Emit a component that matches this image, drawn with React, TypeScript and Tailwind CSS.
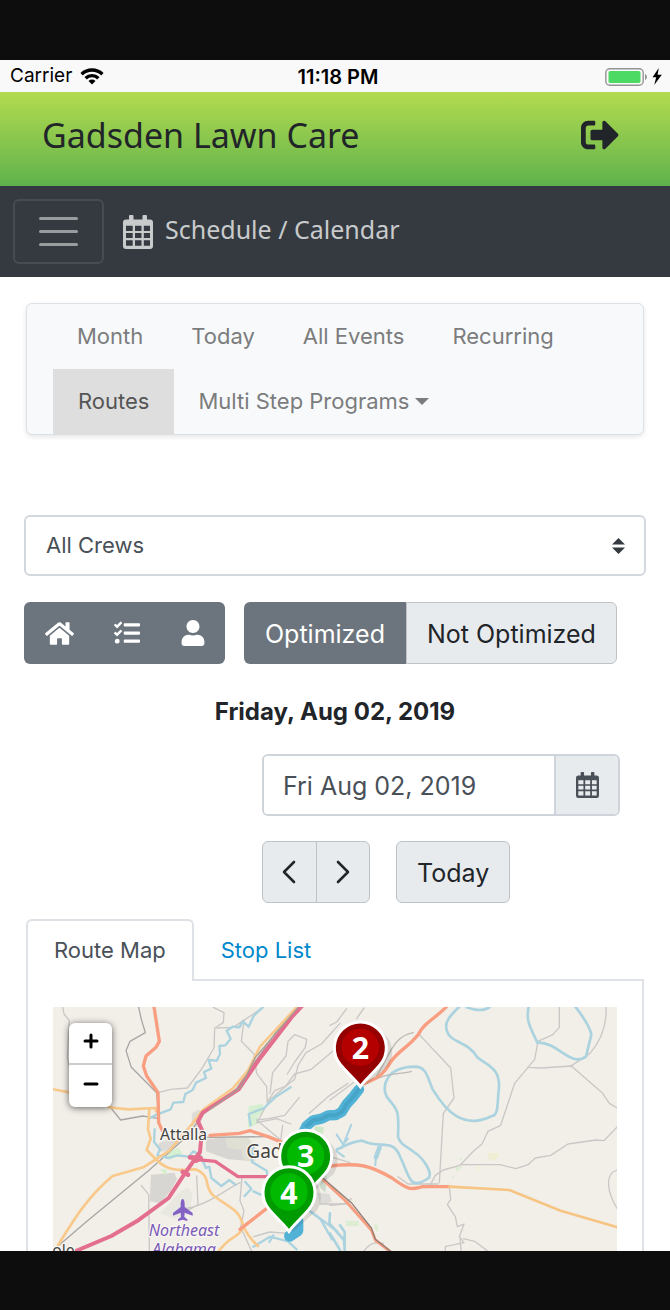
import { useState } from "react";
import { FaHome, FaSignOutAlt, FaTasks, FaUser } from "react-icons/fa";

const NAV_ITEMS = ["Month", "Today", "All Events", "Recurring", "Routes"];

function StatusBar() {
  return (
    <div className="grid h-8 grid-cols-3 items-center bg-[#f9f9f9] pt-px pr-2 pl-[10px] text-black">
      <div className="flex items-center gap-2 text-[19px]">
        <span>Carrier</span>
        <svg viewBox="0 0 24 17" className="h-[17px] w-6" fill="none" stroke="currentColor" strokeWidth="3.4" aria-label="Wi-Fi">
          <path d="M1.6 6.2a15 15 0 0 1 20.8 0" />
          <path d="M5.6 10.2a9.2 9.2 0 0 1 12.8 0" />
          <path d="M12 16.6l-3.5-3.6a5 5 0 0 1 7 0z" fill="currentColor" stroke="none" />
        </svg>
      </div>
      <span className="pl-1 text-center text-xl font-semibold whitespace-nowrap">11:18 PM</span>
      <div className="flex items-center justify-end gap-1">
        <svg viewBox="0 0 43 18" className="h-[18px] w-[43px]" aria-label="Battery">
          <rect x=".8" y=".8" width="37.4" height="16.4" rx="4" fill="none" stroke="#949494" strokeWidth="1.4" />
          <rect x="3.5" y="3" width="32" height="12" rx="1.8" fill="#4cd964" />
          <path d="M40 6c2.600 1 2.600 5 0 6z" fill="#949494" />
        </svg>
        <svg viewBox="0 0 10 17" className="h-[17px] w-[10px]" fill="currentColor" aria-label="Charging">
          <path d="M6.800 0L.5 9.300h3.700L2.200 17 9.800 6.700H5.600z" />
        </svg>
      </div>
    </div>
  );
}

function CalendarIcon({ className }: { className: string }) {
  return (
    <svg viewBox="0 0 30 34" className={className} fill="currentColor" aria-hidden="true">
      <path
        fillRule="evenodd"
        d="M6 1q0-1 1-1h2.500q1 0 1 1v3.500h9V1q0-1 1-1H23q1 0 1 1v3.500h3q3 0 3 3V31q0 3-3 3H3q-3 0-3-3V7.500q0-3 3-3h3zM3 10.700v5.300h6.700v-5.300zM12 10.700v5.300h6.500v-5.300zM20.800 10.700v5.300H27v-5.300zM3 18v5h6.700v-5zM12 18v5h6.500v-5zM20.800 18v5H27v-5zM3 25.300v5.500h6.700v-5.500zM12 25.300v5.500h6.500v-5.500zM20.800 25.300v5.500H27v-5.500z"
      />
    </svg>
  );
}

function Chevron({ d }: { d: string }) {
  return (
    <svg viewBox="0 0 14 24" className="h-6 w-[14px]" fill="none" stroke="currentColor" strokeWidth="2.600" strokeLinecap="round" strokeLinejoin="round" aria-hidden="true">
      <path d={d} />
    </svg>
  );
}

function Pin({ x, y, label, dark, light }: { x: number; y: number; label: string; dark: string; light: string }) {
  return (
    <g transform={`translate(${x} ${y})`}>
      <path d="M12 118L-45 54A76 76 0 1 1 84 54Z" fill="#000" opacity=".1" />
      <path d="M0 117C-12 99-41 74-59 52A78 78 0 1 1 59 52C41 74 12 99 0 117Z" fill={dark} stroke="#fff" strokeWidth="9" />
      <circle r="56" cy="-1" fill={light} />
      <text y="34" textAnchor="middle" fontSize="91" fontWeight="700" fill="#fff">
        {label}
      </text>
    </g>
  );
}

function RouteMap() {
  return (
    <svg
      viewBox="0 0 1692 732"
      preserveAspectRatio="xMidYMin slice"
      className="block h-[244px] w-full bg-[#f2efe9] font-['Noto_Sans',sans-serif]"
      role="img"
      aria-label="Route map"
    >
      <g transform="translate(-39 -21)" fill="none" strokeLinejoin="round" strokeLinecap="round">
        <g stroke="none">
          <path d="M333 524l70-6 8 20-20 36-30 36-32-6z" fill="#d8d6d2" />
          <path d="M498 418l58-6 12 30 42 6 10 34-56-4-66-24z" fill="#d8d6d2" />
          <path d="M556 414h70l20 30v40h-34l-8-34-42-6z" fill="#e0dfd4" />
          <path d="M456 340l20-12 14 20-14 34-22 4z" fill="#deddd6" />
          <path d="M356 430l40-16 24 16-30 22-36 4z" fill="#dddbd7" />
          <path d="M362 640l60-66 22-12 14 20-10 60-46 14z" fill="#e8e7e0" />
          <path d="M626 318l42-6 4 24-20 12 6 22-34 14z" fill="#d5efd0" />
          <path d="M360 508h22l-6 18zM378 460l38-16 12 18-40 18z" fill="#d5efd0" />
          <path d="M826 378l26 4-4 22-26-6z" fill="#cfe8c8" />
          <path d="M846 520l14 4-4 54-16-16z" fill="#ccd9cb" />
          <path d="M832 578l36 4 8 24-36 6z" fill="#dddbd7" />
        </g>
        <g stroke="#c9c8c6" strokeWidth="4">
          <path d="M68 20l4 22 16 20-6 110 8 40" />
          <path d="M520 22l32 16-2 30-26 16-2 60-38 64-42 56-50 4-38 10" />
          <path d="M530 84l50-2 30-20 60-40" />
          <path d="M612 60l-8 64 38 38 8 58 30 40 2 52-32 56 60-12 42 16" />
          <path d="M682 306l22-34 34-14 26-20 10-42 24-38 46-26 56-62" />
          <path d="M690 280l8-62 40-50 6-44 20-20 36 14-4 24-32 44-22 36" />
          <path d="M682 306l52-44 30-40 50-14 90-76" />
          <path d="M650 360l36-4 48-10 44-54M650 360l72 60 6-44" />
          <path d="M304 556l22 28 2 168M470 528l4 86-32 18M420 628c80-8 120-50 180-80M606 530l-6 72 12 30-10 50 34 74" />
          <path d="M808 340l56-50 60-40M640 710l50-14 54 4M840 612h80" />
        </g>
        <g stroke="#a7a6a4" strokeWidth="4">
          <path d="M296 22l8 36 12 40-46 26-12 28 16 50 76 76 8 84" />
          <path d="M50 742l88-76 190-156 118-106 42-60 100-76 48-70 90-126 44-44" />
          <path d="M208 318l34 42 66-12 50 8M500 412l180-2" />
        </g>
        <g stroke="#aad3df" strokeWidth="7">
          <path d="M668 22l-26 24-16 34-18-16-10 18-20-2-18 12 12 24-16 20-18 2 2 24-10 20-24-2 8 26-22 10 6 18-30 14-10 22-22 12-6 24-30 2-8 20-42 16-20 10" />
          <path d="M344 388l-2 38 18 22-8 18 34 8 24-8 36 4 14-16 20 10 18 40 10-4 6 34 30 24 24-18 18 14" />
          <path d="M632 376l-6-34 46-18 36-34 44-28M640 440l-4 46 44 26 6 40M616 546l18 20-20 22M640 574l22 10" />
          <path d="M790 620l52 38 34 60M812 634l80 60M640 740l50-30 54 14 26 24M700 706l-12 20" />
        </g>
        <g stroke="#f8c98a" strokeWidth="8">
          <path d="M30 266l62 12M206 322l60 6 82-4v10M328 328l-4 60 8 28-12 34 30 30c38 38 76 30 116 28 54 22 20 52 56 80 60 44 72 40 86 84 6 22 28 50 46 66" />
          <path d="M48 746c60-100 100-160 170-218l92-26 78-50 70-82 30-40 90-64 46-54 36-72 108-116" />
          <path d="M534 756c40-54 60-40 72-70" />
        </g>
        <g stroke="#f99e81" strokeWidth="10">
          <path d="M342 20l16 104-10 18-30 26-8 30 10 30 34 50 2 90 12 26" />
          <path d="M510 406l88-6 32-8 54 18 50 20M600 688l92-72" />
        </g>
        <path d="M100 756l114-48 76-44 96-70 50-76 44-62 6-66-12-26 14-26 108-70 60-88 100-130 32-34" stroke="#e46e8d" strokeWidth="12" />
        <path d="M464 478l62 6 68 46h100" stroke="#e46e8d" strokeWidth="10" />
        <path d="M450 472l32 2-14 8 6-16M428 516l16 8" stroke="#e46e8d" strokeWidth="14" />
        <path d="M776 20l-130 152-44 90-92 66" stroke="#a69d94" strokeWidth="4" />
      </g>

      <g transform="translate(831 -21)" fill="none" strokeLinejoin="round" strokeLinecap="round">
        <g stroke="#c9c8c6" strokeWidth="4">
          <path d="M0 300l70-52M0 76l20-10 30-40M80 56l22-32" />
          <path d="M268 104l94 100 10 90-32 46-12 208" />
          <path d="M688 20v62l-20 22-44 20-10 54-20 24 40 2 90-6 44 38 50 44 20 30 34 20" />
          <path d="M594 202l-40 48-22 66-20 60-38 18-18 38-26 22-40 42-50 14-24 16-16 30-14 8" />
          <path d="M390 494h120l48 12 36-12 22-20 46-8 52-34 84-12 24 2 40-42" />
          <path d="M828 20q4 80-48 140l-60 40M862 510c-40 10-30 70 0 116" />
          <path d="M358 560l4 38-10 16 24 36 6 30 20-8-14 38 14 18-56 12v20M390 718l4 40M400 716l34 8 40 30M0 616l40-4 24-16M100 756c20-30 40-30 60-26" />
          <path d="M0 470l60 18M204 530l30 22h90" />
        </g>
        <g stroke="#aad3df" strokeWidth="8">
          <path d="M388 20c-36 34-50 54-32 84 14 24 58 22 86 68 34 26 72 34 64 100-4 30 0 76-20 76-86 42-138-14-178-80-16-36-18-68-54-68-90 2-98 60-84 90 30 40 38 30 34 120 6 22 20 26 48 46 30 20 56 62 44 78-60 40-56-4-84-60-24-64-60-24-116-52-50 6-60 24-76 26" />
          <path d="M410 22q44 16 68 0M596 20c-10 46 8 66 26 108 60-4 100 76 146 42l16-66c-4-24-28-58-48-84" />
          <path d="M20 404l20 30 24-60M38 434l16-18M20 454l22 16M152 440l-14 20-2 36" strokeWidth="6" />
          <path d="M148 444l-10 28" strokeWidth="14" />
          <path d="M0 640l-2 30 44 50 2 30M30 676l14 20v54M0 700l30 50" strokeWidth="8" />
        </g>
        <path d="M110 250c60-34 90-24 134-36M140 228c40-64 50-120 110-130" stroke="#bdbab7" strokeWidth="4" />
        <g fill="#dcedd2" stroke="none">
          <path d="M48 662h38v16H48zM134 670l10 6v20l-10-12zM376 502l24-4-20 18zM386 474h10v8zM366 528l10-4-8 12z" />
          <path d="M474 458l34 2-12 22-20-4zM438 500l16 2-8 8z" fill="#efedd2" />
        </g>
        <path d="M350 20c-40 40-70 50-84 82-30 40-60 48-84 84-22 40-44 52-84 66" stroke="#f99e81" strokeWidth="10" />
        <path d="M0 498c90-10 120-2 186 36 54 40 58 34 92 26h80" stroke="#f99e81" strokeWidth="10" />
        <path d="M-30 522l6 14 74 70 74 84 12 30 46 36" stroke="#f99e81" strokeWidth="9" />
        <path d="M-26 530l90 78 60 76 12 34 46 36" stroke="#8f8177" strokeWidth="4" />
        <path d="M358 560l180 10 154 62 172 50" stroke="#f6c583" strokeWidth="8" />
      </g>

      <g fill="none" strokeLinejoin="round" strokeLinecap="round">
        <path d="M918 247l-17 22-20 22-15 24-17 9-23 1-20 10-25 5-20 16-8 16" stroke="#51b2d5" strokeWidth="31" />
        <path d="M918 247l-17 22-20 22-15 24-17 9-23 1-20 10-25 5-20 16" stroke="#45a4c7" strokeWidth="12" />
        <path d="M734 640v31l-24 16" stroke="#51b2d5" strokeWidth="34" />
      </g>

      <g stroke="#f8f6f2" strokeWidth="7" paintOrder="stroke" strokeLinejoin="round" fill="#444">
        <text x="321" y="399" fontSize="47">Attalla</text>
        <text x="580" y="452" fontSize="57">Gadsden</text>
        <text x="-2" y="746" fontSize="47">ole</text>
        <g fill="#7b5ab8" fontStyle="italic" textAnchor="middle" fontSize="48">
          <text x="393" y="687">Northeast</text>
          <text x="393" y="743">Alabama</text>
        </g>
      </g>
      <path
        d="M389 576q5 0 6 14v10l24 18v8l-24-9-1 13 9 7v5l-14-4-14 4v-5l9-7-1-13-23 9v-8l23-18v-10q1-14 6-14z"
        fill="#8461c4"
      />

      <Pin x={758} y={447} label="3" dark="#009b00" light="#00b900" />
      <Pin x={922} y={122} label="2" dark="#940000" light="#b50000" />
      <Pin x={708} y={556} label="4" dark="#009b00" light="#00b900" />
    </svg>
  );
}

export default function App() {
  const [date, setDate] = useState("Fri Aug 02, 2019");

  return (
    <div className="min-h-screen bg-[#0d0d0d] pt-[60px] pb-[59px] font-['Inter',sans-serif] text-[#212529]">
      <div className="overflow-hidden bg-white">
        <StatusBar />

        <header className="flex h-[94px] items-center justify-between bg-linear-to-b from-[#b2db4e] to-[#5eb24c] pr-[51px] pb-2 pl-[42px] font-['Noto_Sans',sans-serif]">
          <h1 className="text-[34px]">Gadsden Lawn Care</h1>
          <button type="button" aria-label="Sign out">
            <FaSignOutAlt className="size-[38px]" />
          </button>
        </header>

        <div className="flex h-[91px] items-center bg-[#343a40] pl-[13px] font-['Noto_Sans',sans-serif] text-[#c9cacc]">
          <button
            type="button"
            aria-label="Toggle navigation"
            className="flex h-[65px] w-[91px] flex-col items-center justify-center gap-[10px] rounded-md border-2 border-[#474c53]"
          >
            <span className="h-[3px] w-[39px] rounded-full bg-[#999c9f]" />
            <span className="h-[3px] w-[39px] rounded-full bg-[#999c9f]" />
            <span className="h-[3px] w-[39px] rounded-full bg-[#999c9f]" />
          </button>
          <CalendarIcon className="ml-[19px] h-[34px] w-[30px]" />
          <span className="ml-3 pb-[3px] text-[25px]">Schedule / Calendar</span>
        </div>

        <main className="pt-[26px]">
          <nav className="mx-[26px] flex flex-wrap rounded-md border border-[#dce1e6] bg-[#f8f9fb] px-[26px] text-[22px] text-[#7b7c7d] shadow-[0_2px_5px_rgba(0,0,0,0.1)]">
            {NAV_ITEMS.map((item) => (
              <a
                key={item}
                href="#"
                className={
                  item === "Routes"
                    ? "flex h-[65px] items-center bg-[#dedede] px-[25px] text-[#555]"
                    : "flex h-[65px] items-center px-6"
                }
              >
                {item}
              </a>
            ))}
            <a href="#" className="flex h-[65px] items-center gap-[6px] px-6">
              Multi Step Programs
              <svg viewBox="0 0 14 7" className="h-[7px] w-[14px]" fill="currentColor" aria-hidden="true">
                <path d="M0 0h14L7 7z" />
              </svg>
            </a>
          </nav>

          <div className="mx-6 mt-20 grid items-center">
            <select
              aria-label="Crew"
              className="col-start-1 row-start-1 h-[61px] w-full appearance-none rounded-md border-2 border-[#d3d8de] bg-white px-5 text-[22px] text-[#495057]"
            >
              <option>All Crews</option>
            </select>
            <svg viewBox="0 0 13 16" className="pointer-events-none col-start-1 row-start-1 mr-[21px] h-4 w-[13px] justify-self-end" fill="#343a40" aria-hidden="true">
              <path d="M0 6.500L6.500 0 13 6.500zM0 9.500h13L6.500 16z" />
            </svg>
          </div>

          <div className="mx-6 mt-[26px] flex h-[62px] gap-[19px] text-[25px]">
            <div className="flex w-[201px] items-center justify-between rounded-md bg-[#6c757d] pr-[19px] pl-[21px] text-white">
              <button type="button" aria-label="Home">
                <FaHome className="size-[29px]" />
              </button>
              <button type="button" aria-label="Tasks">
                <FaTasks className="size-[26px]" />
              </button>
              <button type="button" aria-label="Customer">
                <FaUser className="size-[26px]" />
              </button>
            </div>
            <div className="flex">
              <button type="button" className="rounded-l-md bg-[#6c757d] px-[21px] pt-[3px] text-white">
                Optimized
              </button>
              <button type="button" className="rounded-r-md border border-[#c0c3c6] bg-[#e8ebee] px-5 pt-[3px]">
                Not Optimized
              </button>
            </div>
          </div>

          <h2 className="mt-8 text-center text-2xl font-bold">Friday, Aug 02, 2019</h2>

          <div className="mt-[26px] mr-[50px] ml-[262px]">
            <div className="flex h-[62px] overflow-hidden rounded-md border-2 border-[#ced4da] text-[25px] text-[#495057]">
              <input
                type="text"
                aria-label="Date"
                value={date}
                onChange={(e) => setDate(e.target.value)}
                className="min-w-0 flex-1 bg-white px-[19px] pt-[3px]"
              />
              <button type="button" aria-label="Open calendar" className="flex w-16 items-center justify-center border-l-2 border-[#ced4da] bg-[#e8ebee]">
                <CalendarIcon className="h-[26px] w-[23px]" />
              </button>
            </div>
            <div className="mt-[25px] flex h-[62px] gap-[26px] text-[25px]">
              <div className="flex w-[108px] overflow-hidden rounded-md border border-[#c0c3c6] bg-[#e8ebee]">
                <button type="button" aria-label="Previous day" className="flex flex-1 items-center justify-center">
                  <Chevron d="M12 2L2 12l10 10" />
                </button>
                <button type="button" aria-label="Next day" className="flex flex-1 items-center justify-center border-l border-[#c0c3c6]">
                  <Chevron d="M2 2l10 10L2 22" />
                </button>
              </div>
              <button type="button" className="rounded-md border border-[#c0c3c6] bg-[#e8ebee] px-5 pt-[3px]">
                Today
              </button>
            </div>
          </div>

          <section className="mx-[26px] mt-4">
            <div className="flex items-end text-[22px]" role="tablist">
              <button type="button" role="tab" aria-selected="true" className="h-[62px] rounded-t-md border-2 border-b-0 border-[#dee2e6] px-[26px] pb-[2px] text-[#495057]">
                Route Map
              </button>
              <div className="flex h-[62px] flex-1 border-b-2 border-[#dee2e6]">
                <button type="button" role="tab" aria-selected="false" className="px-[27px] pt-[2px] text-[#0088cc]">
                  Stop List
                </button>
              </div>
            </div>
            <div className="border-x-2 border-[#dee2e6] px-[25px] pt-[26px]">
              <div className="relative">
                <RouteMap />
                <div className="absolute top-4 left-4 flex w-[43px] flex-col overflow-hidden rounded-md bg-white text-black shadow-[0_1px_7px_rgba(0,0,0,0.6)]">
                  <button type="button" aria-label="Zoom in" className="flex h-[42px] items-center justify-center border-b-2 border-[#ccc] pb-1">
                    <svg viewBox="0 0 16 16" className="size-4" stroke="currentColor" strokeWidth="3" strokeLinecap="round" aria-hidden="true">
                      <path d="M8 2v12M2 8h12" />
                    </svg>
                  </button>
                  <button type="button" aria-label="Zoom out" className="flex h-[42px] items-center justify-center pb-1">
                    <svg viewBox="0 0 16 16" className="size-4" stroke="currentColor" strokeWidth="3" strokeLinecap="round" aria-hidden="true">
                      <path d="M2 8h12" />
                    </svg>
                  </button>
                </div>
              </div>
            </div>
          </section>
        </main>
      </div>
    </div>
  );
}
